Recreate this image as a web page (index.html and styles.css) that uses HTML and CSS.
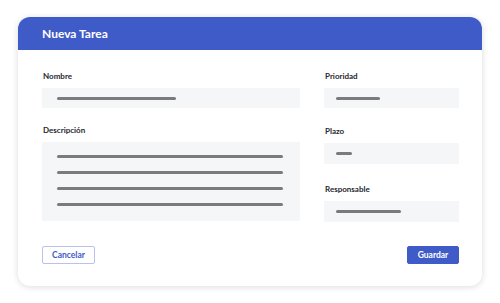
FILE: index.html
```html
<!DOCTYPE html>
<html lang="es">

<head>
    <meta charset="UTF-8">
    <title>Nueva Tarea</title>
    <link rel="stylesheet" href="styles.css">
</head>

<body>

    <div class="card">
        <div class="card-header">Nueva Tarea</div>

        <div class="card-body">
            <div class="col col-main">
                <div class="field">
                    <label>Nombre</label>
                    <div class="input"><span class="bar" style="width: 119px"></span></div>
                </div>
                <div class="field">
                    <label>Descripción</label>
                    <div class="input textarea">
                        <span class="bar"></span>
                        <span class="bar"></span>
                        <span class="bar"></span>
                        <span class="bar"></span>
                    </div>
                </div>
            </div>

            <div class="col col-side">
                <div class="field">
                    <label>Prioridad</label>
                    <div class="input"><span class="bar" style="width: 44px"></span></div>
                </div>
                <div class="field">
                    <label>Plazo</label>
                    <div class="input"><span class="bar" style="width: 16px"></span></div>
                </div>
                <div class="field">
                    <label>Responsable</label>
                    <div class="input"><span class="bar" style="width: 65px"></span></div>
                </div>
            </div>
        </div>

        <div class="card-footer">
            <button class="btn btn-outline">Cancelar</button>
            <button class="btn btn-primary">Guardar</button>
        </div>
    </div>

</body>

</html>
```

FILE: styles.css
```css
body {
    margin: 0;
    padding: 17px 18px;
    background: #ffffff;
    font-family: 'Lato', 'Open Sans', sans-serif;
}

.card {
    width: 464px;
    height: 269px;
    box-sizing: border-box;
    background: #ffffff;
    border-radius: 12px;
    box-shadow: 0 1px 6px rgba(30, 40, 80, 0.16);
    overflow: hidden;
    display: flex;
    flex-direction: column;
}

.card-header {
    height: 33px;
    display: flex;
    align-items: center;
    padding: 0 24px;
    background: #3f5bc7;
    color: #ffffff;
    font-size: 12px;
    font-weight: 700;
}

.card-body {
    display: flex;
    gap: 24px;
    padding: 21px 23px 0 24px;
}

.col {
    display: flex;
    flex-direction: column;
}

.col-main {
    flex: 1;
    gap: 17px;
}

.col-side {
    width: 135px;
    gap: 18px;
}

.col-side .field:last-child {
    margin-top: 2px;
}

.field label {
    display: block;
    height: 10px;
    line-height: 10px;
    margin: 0 0 7px 1px;
    font-size: 8px;
    font-weight: 700;
    color: #26282e;
}

.input {
    height: 20px;
    display: flex;
    align-items: center;
    padding: 0 15px;
    background: #f5f6f8;
}

.col-side .input {
    height: 21px;
    padding: 0 12px;
}

.col-side .field:first-child .input {
    height: 20px;
}

.bar {
    display: block;
    height: 3px;
    border-radius: 2px;
    background: #7b7b7d;
}

.textarea {
    height: 79px;
    flex-direction: column;
    align-items: stretch;
    justify-content: flex-start;
    gap: 13px;
    padding: 13px 17px 0 15px;
    box-sizing: border-box;
}

.card-footer {
    display: flex;
    justify-content: space-between;
    align-items: center;
    margin-top: 24px;
    padding: 0 23px 0 24px;
}

.btn {
    height: 18px;
    padding: 0;
    border-radius: 2px;
    font-family: inherit;
    font-size: 8.5px;
    font-weight: 700;
    cursor: pointer;
}

.btn-outline {
    width: 53px;
    background: #ffffff;
    border: 1px solid #b9c1ec;
    color: #3f5bc7;
}

.btn-primary {
    width: 52px;
    background: #3f5bc7;
    border: 1px solid #3f5bc7;
    color: #ffffff;
}
```
